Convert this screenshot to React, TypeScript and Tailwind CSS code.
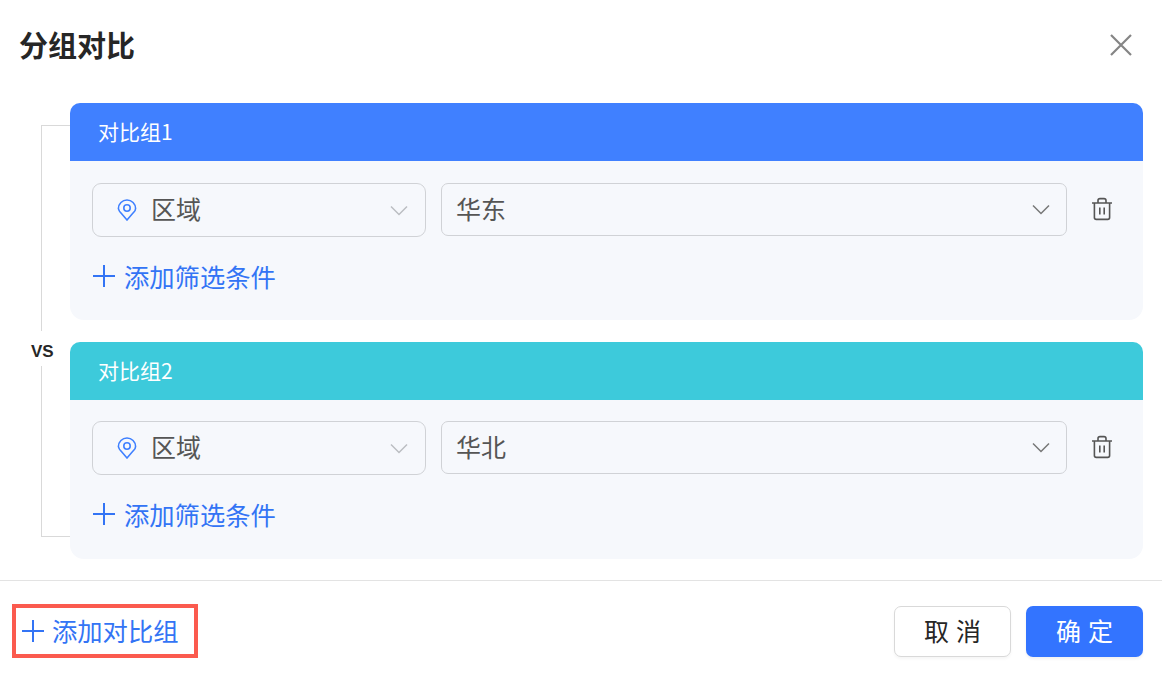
const FONT = "font-['Noto_Sans_CJK_SC','Noto_Sans',sans-serif]";

function Plus({ className }: { className: string }) {
  return (
    <svg viewBox="0 0 24 24" className={className} fill="none" stroke="currentColor" strokeWidth="2">
      <path d="M12 1v22M1 12h22" />
    </svg>
  );
}

function Chevron({ className }: { className: string }) {
  return (
    <svg viewBox="0 0 18 11" className={className} fill="none" stroke="currentColor" strokeWidth="1.5">
      <path d="M1 1.5l8 8 8-8" />
    </svg>
  );
}

function Pin() {
  return (
    <svg viewBox="0 0 20 22" className="h-[22px] w-5 text-[#3f80ff]" fill="none" stroke="currentColor" strokeWidth="1.6">
      <path d="M10 21l-6.2-7.2A8.6 8.6 0 0 1 1.4 9.6a8.6 8.6 0 0 1 17.2 0c0 1.6-.8 3-2.4 4.2L10 21z" />
      <circle cx="10" cy="9" r="3.2" />
    </svg>
  );
}

function Trash() {
  return (
    <svg viewBox="0 0 22 24" className="h-6 w-[22px] text-[#555]" fill="none" stroke="currentColor" strokeWidth="1.6">
      <path d="M1 6h20M7 6V3.500C7 2.400 7.800 1.600 9 1.600h4c1.200 0 2 .8 2 1.900V6M3.400 6v14.500c0 1.100.8 1.900 1.900 1.900h11.400c1.100 0 1.900-.8 1.900-1.900V6M8.800 10.500v7M13.200 10.500v7" />
    </svg>
  );
}

function Group({ title, value, headerClass, bodyClass }: { title: string; value: string; headerClass: string; bodyClass: string }) {
  return (
    <section className="overflow-hidden rounded-[14px] rounded-t-[10px] bg-[#f6f8fc]">
      <div className={`flex h-[58px] items-center pl-[28px] text-[21px] text-white ${headerClass}`}>{title}</div>
      <div className={`h-[159px] pl-[22px] pr-[26px] ${bodyClass}`}>
        <div className="flex items-start">
          <div className="flex h-[54px] w-[334px] items-center rounded-[9px] border border-[#d0d2d6] pl-6 pr-[17px]">
            <Pin />
            <span className="ml-[14px] flex-1 pb-0.5 text-[25px] text-[#555]">区域</span>
            <Chevron className="h-[11px] w-[18px] text-[#bbbdc2]" />
          </div>
          <div className="ml-[15px] flex h-[53px] w-[626px] items-center rounded-[7px] border border-[#d0d2d6] pl-[14px] pr-4">
            <span className="flex-1 pb-0.5 text-[25px] text-[#555]">{value}</span>
            <Chevron className="h-[11px] w-[18px] text-[#777]" />
          </div>
          <div className="ml-6 mt-[14px]"><Trash /></div>
        </div>
        <div className="mt-[21px] flex items-center text-[#3374f5]">
          <Plus className="h-6 w-6" />
          <span className="ml-2 text-[25.3px] leading-[36px]">添加筛选条件</span>
        </div>
      </div>
    </section>
  );
}

export default function App() {
  return (
    <div className={`flex h-[676px] w-[1162px] flex-col overflow-hidden bg-white ${FONT}`}>
      <header className="flex h-[103px] items-start justify-between pl-[19px] pr-[29px] pt-[23px]">
        <h1 className="text-[29px] font-semibold leading-[42px] text-[#262626]">分组对比</h1>
        <svg viewBox="0 0 24 24" className="mt-[10px] h-6 w-6 text-[#858585]" fill="none" stroke="currentColor" strokeWidth="2.200">
          <path d="M2 2l20 20M22 2L2 22" />
        </svg>
      </header>
      <main className="relative ml-[70px] mr-[19px] flex h-[456px] flex-col gap-[22px]">
        <div className="absolute -left-[29px] top-[22px] h-[412px] w-[29px] border-y border-l border-[#d9d9d9]" />
        <div className="absolute -left-[39px] top-[228px] bg-white pt-[6px] text-[17px] font-bold leading-[29px] text-[#262626] font-['Liberation_Sans',sans-serif]">VS</div>
        <Group title="对比组1" value="华东" headerClass="bg-[#4080ff]" bodyClass="pt-[22px]" />
        <Group title="对比组2" value="华北" headerClass="bg-[#3dcadb]" bodyClass="pt-[21px]" />
      </main>
      <footer className="mt-[21px] flex h-[96px] items-start justify-between border-t border-[#e3e3e3] pl-3 pr-[19px] pt-[23px]">
        <div className="flex h-[54px] w-[186px] items-center border-4 border-[#fb5a4e] pl-[5px] text-[#3374f5]">
          <Plus className="h-6 w-6" />
          <span className="ml-[7px] pb-0.5 text-[25.3px] leading-[36px]">添加对比组</span>
        </div>
        <div className="mt-[2px] flex gap-[15px]">
          <button className="h-[51px] w-[117px] rounded-[7px] border border-[#d9d9d9] bg-white pb-0.5 pl-[7px] text-[25px] tracking-[7px] text-[#262626] shadow-[0_2px_3px_rgba(0,0,0,0.04)]">取消</button>
          <button className="h-[51px] w-[117px] rounded-[7px] bg-[#3374ff] pb-0.5 pl-[7px] text-[25px] tracking-[7px] text-white shadow-[0_2px_3px_rgba(0,0,0,0.06)]">确定</button>
        </div>
      </footer>
    </div>
  );
}
